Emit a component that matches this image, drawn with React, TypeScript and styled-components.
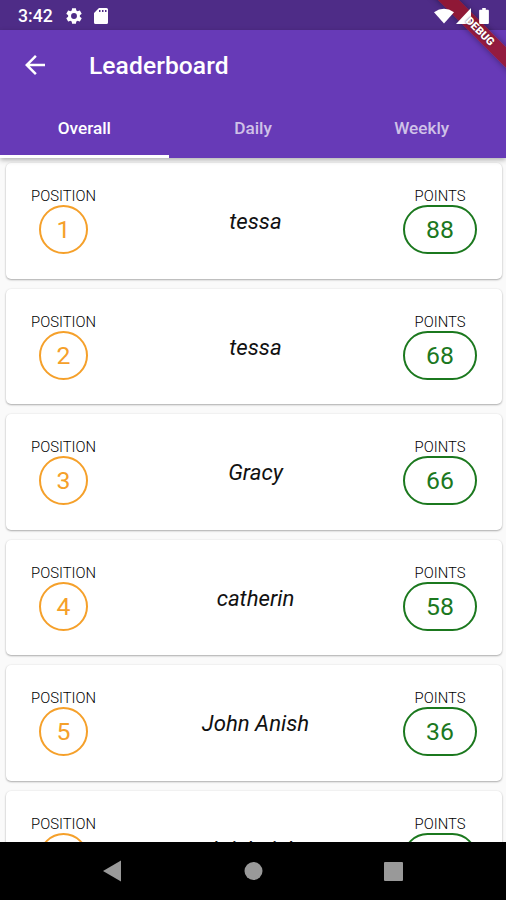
import React from "react";
import styled, { createGlobalStyle } from "styled-components";

const Global = createGlobalStyle`
  * { box-sizing: border-box; }
  body { margin: 0; background: #fafafa; font-family: Roboto, sans-serif; }
`;

const Screen = styled.div`
  position: relative;
  width: 506px;
  height: 900px;
  display: flex;
  flex-direction: column;
  overflow: hidden;
  background: #fafafa;
`;
const StatusBar = styled.div`
  flex: none;
  height: 30px;
  padding: 2px 17px 0 18px;
  display: flex;
  align-items: center;
  background: #4e2c87;
  color: #fff;
`;
const Clock = styled.span`
  width: 47px;
  font-size: 17.6px;
  font-weight: 500;
  line-height: 28px;
`;
const StatusIcon = styled.svg<{ $gap?: number }>`
  position: relative;
  z-index: 3;
  display: block;
  flex: none;
  fill: #fff;
  margin-right: ${(p) => p.$gap ?? 0}px;
`;
const Spacer = styled.div`
  flex: 1;
`;
const Header = styled.header`
  flex: none;
  position: relative;
  z-index: 1;
  height: 128px;
  background: #673ab7;
  color: #fff;
  box-shadow: 0 2px 5px rgba(0, 0, 0, 0.3);
`;
const TitleRow = styled.div`
  height: 69px;
  display: flex;
  align-items: center;
  padding-left: 20px;
`;
const BackIcon = styled.svg`
  display: block;
  fill: #fff;
  margin-right: 39px;
`;
const Title = styled.h1`
  margin: 1px 0 0;
  font-size: 24.6px;
  font-weight: 500;
  letter-spacing: 0.08px;
`;
const Tabs = styled.nav`
  height: 59px;
  display: grid;
  grid-template-columns: repeat(3, 1fr);
`;
const Tab = styled.div<{ $active?: boolean }>`
  display: flex;
  align-items: center;
  justify-content: center;
  padding-top: 1px;
  font-size: 17.2px;
  font-weight: 500;
  border-bottom: 3px solid ${(p) => (p.$active ? "#fff" : "transparent")};
  color: ${(p) => (p.$active ? "#fff" : "rgba(255,255,255,0.7)")};
`;
const List = styled.main`
  flex: 1;
  min-height: 0;
  overflow: hidden;
  padding: 5px 4px 0 6px;
  display: flex;
  flex-direction: column;
  gap: 10px;
`;
const Card = styled.article`
  flex: none;
  height: 115.5px;
  padding: 25px 25px 0;
  display: grid;
  grid-template-columns: 65px 1fr 74px;
  border-radius: 5px;
  background: #fff;
  box-shadow: 0 1px 2px rgba(0, 0, 0, 0.3), 0 0 2px rgba(0, 0, 0, 0.08);
`;
const Column = styled.div`
  display: flex;
  flex-direction: column;
  align-items: center;
`;
const Label = styled.span`
  font-size: 14.8px;
  line-height: 17px;
  font-weight: 300;
  color: #000;
  white-space: nowrap;
`;
const Badge = styled.span<{ $wide?: boolean }>`
  width: ${(p) => (p.$wide ? 74 : 49)}px;
  height: 49px;
  display: flex;
  align-items: center;
  justify-content: center;
  border: 2px solid ${(p) => (p.$wide ? "#1b781e" : "#f5a02a")};
  border-radius: 25px;
  color: ${(p) => (p.$wide ? "#1b781e" : "#f5a02a")};
  font-size: 24.8px;
  line-height: 29px;
  font-weight: 400;
`;
const Name = styled.span`
  padding: 19px 0 0 12px;
  text-align: center;
  font-size: 22.2px;
  line-height: 28px;
  font-style: italic;
  font-weight: 400;
  color: #111;
`;
const NavBar = styled.footer`
  flex: none;
  height: 58px;
  display: flex;
  justify-content: center;
  background: #000;
`;
const NavIcons = styled.svg`
  display: block;
  fill: #999;
`;
const Ribbon = styled.div`
  position: absolute;
  z-index: 2;
  top: 24px;
  right: -49px;
  width: 150px;
  height: 15px;
  transform: rotate(45deg);
  background: rgba(160, 20, 34, 0.8);
  box-shadow: 0 0 6px rgba(0, 0, 0, 0.4);
`;
const RibbonText = styled(Ribbon)`
  z-index: 4;
  background: none;
  box-shadow: none;
  color: #fff;
  font-size: 11px;
  font-weight: 900;
  line-height: 15px;
  text-align: center;
  text-shadow: 0 0 2px rgba(80, 20, 40, 0.9);
`;

const rows = [
  { name: "tessa", points: 88 },
  { name: "tessa", points: 68 },
  { name: "Gracy", points: 66 },
  { name: "catherin", points: 58 },
  { name: "John Anish", points: 36 },
  { name: "krishnich", points: 30 },
];

export default function App() {
  return (
    <>
      <Global />
      <Screen>
        <StatusBar>
          <Clock>3:42</Clock>
          <StatusIcon $gap={11} width="18" height="18" viewBox="1 1 22 22">
            <path d="M19.14 12.94c.04-.3.06-.61.06-.94s-.02-.64-.07-.94l2.03-1.58c.18-.14.23-.41.12-.61l-1.92-3.32c-.12-.22-.37-.29-.59-.22l-2.39.96c-.5-.38-1.03-.7-1.62-.94L14.4 2.81c-.04-.24-.24-.41-.48-.41h-3.84c-.24 0-.43.17-.47.41l-.36 2.54c-.59.24-1.13.57-1.62.94l-2.39-.96c-.22-.08-.47 0-.59.22L2.74 8.87c-.12.21-.08.47.12.61l2.03 1.58c-.05.3-.09.63-.09.94s.02.64.07.94l-2.03 1.58c-.18.14-.23.41-.12.61l1.92 3.32c.12.22.37.29.59.22l2.39-.96c.5.38 1.03.7 1.62.94l.36 2.54c.05.24.24.41.48.41h3.84c.24 0 .44-.17.47-.41l.36-2.54c.59-.24 1.13-.56 1.62-.94l2.39.96c.22.08.47 0 .59-.22l1.92-3.32c.12-.22.07-.47-.12-.61l-2.01-1.58zM12 15.6A3.6 3.6 0 1 1 12 8.4a3.6 3.6 0 0 1 0 7.2z" />
          </StatusIcon>
          <StatusIcon width="14" height="16" viewBox="0 0 14 16">
            <path
              d="M5 0h7.5A1.5 1.5 0 0 1 14 1.5V14.5A1.5 1.5 0 0 1 12.5 16h-11A1.5 1.5 0 0 1 0 14.5V5zM5 2V4h1.5V2zm3 0V4h1.5V2zm3 0V4h1.5V2z"
              fillRule="evenodd"
            />
          </StatusIcon>
          <Spacer />
          <StatusIcon $gap={2} width="20" height="16" viewBox="0 0 21 16">
            <path d="M0 4Q10.5-3 21 4L10.5 16z" />
          </StatusIcon>
          <StatusIcon $gap={8} width="15" height="16" viewBox="0 0 16 17">
            <path d="M16 0v17H0z" />
          </StatusIcon>
          <StatusIcon width="10" height="16" viewBox="0 0 11 18">
            <path d="M3.5 0h4v2H10a1 1 0 0 1 1 1v14a1 1 0 0 1-1 1H1a1 1 0 0 1-1-1V3a1 1 0 0 1 1-1h2.5z" />
          </StatusIcon>
        </StatusBar>
        <Header>
          <TitleRow>
            <BackIcon width="30" height="30" viewBox="0 0 24 24">
              <path d="M20 11H7.83l5.59-5.59L12 4l-8 8 8 8 1.41-1.41L7.83 13H20z" />
            </BackIcon>
            <Title>Leaderboard</Title>
          </TitleRow>
          <Tabs>
            <Tab $active>Overall</Tab>
            <Tab>Daily</Tab>
            <Tab>Weekly</Tab>
          </Tabs>
        </Header>
        <List>
          {rows.map((row, i) => (
            <Card key={i}>
              <Column>
                <Label>POSITION</Label>
                <Badge>{i + 1}</Badge>
              </Column>
              <Name>{row.name}</Name>
              <Column>
                <Label>POINTS</Label>
                <Badge $wide>{row.points}</Badge>
              </Column>
            </Card>
          ))}
        </List>
        <NavBar>
          <NavIcons width="506" height="58" viewBox="0 0 506 58">
            <path d="M103 29L121 18.5V39.5z" />
            <circle cx="253.5" cy="29" r="9" />
            <rect x="384" y="20" width="19" height="19" rx="1" />
          </NavIcons>
        </NavBar>
        <Ribbon />
        <RibbonText>DEBUG</RibbonText>
      </Screen>
    </>
  );
}
